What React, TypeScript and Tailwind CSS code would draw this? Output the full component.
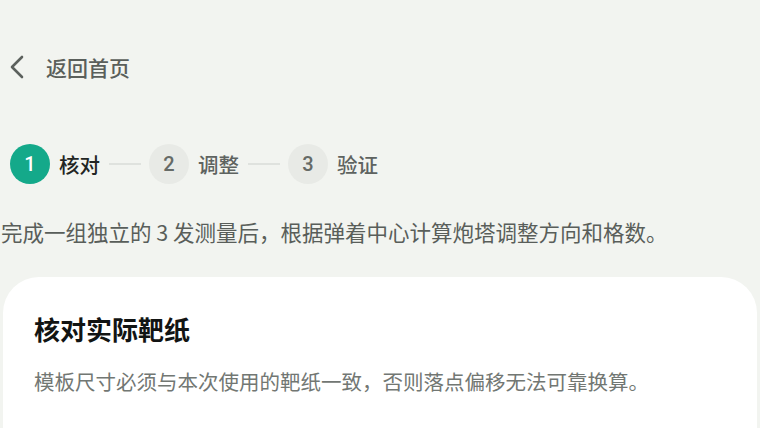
import React from "react";

const FONT = '"Noto Sans CJK SC", "Noto Sans", Roboto, sans-serif';

function Step({ n, label, active }: { n: number; label: string; active?: boolean }) {
  return (
    <div className="flex items-center">
      <div
        className={
          active
            ? "w-10 h-10 rounded-full bg-[#14a98a] text-white flex items-center justify-center text-[20px] font-medium"
            : "w-10 h-10 rounded-full bg-[#e8eae6] text-[#666b67] flex items-center justify-center text-[20px] font-medium"
        }
        style={{ fontFamily: 'Roboto, "Noto Sans", sans-serif' }}
      >
        {n}
      </div>
      <span
        className={
          active
            ? "ml-[9px] w-[42px] text-[20.5px] leading-[30px] font-medium text-[#222523]"
            : "ml-[9px] w-[42px] text-[20.5px] leading-[30px] font-medium text-[#5e6360]"
        }
      >
        {label}
      </span>
    </div>
  );
}

function Line() {
  return <div className="mx-2 w-8 h-[2px] bg-[#dfe2de]" />;
}

export default function App() {
  return (
    <div
      className="w-full h-[428px] overflow-hidden bg-[#f2f4f0] flex flex-col"
      style={{ fontFamily: FONT }}
    >
      <div className="mt-[44px] h-[46px] flex items-center pl-[9px]">
        <svg width="16" height="24" viewBox="0 0 16 24" fill="none">
          <path d="M13 2 L3 12 L13 22" stroke="#5c615d" strokeWidth="2.6" strokeLinecap="round" strokeLinejoin="round" />
        </svg>
        <span className="ml-[21px] text-[21px] leading-[30px] font-medium text-[#5a5f5b]">返回首页</span>
      </div>

      <div className="mt-[54px] h-10 flex items-center pl-[10px]">
        <Step n={1} label="核对" active />
        <Line />
        <Step n={2} label="调整" />
        <Line />
        <Step n={3} label="验证" />
      </div>

      <p className="mt-[33px] pl-[1px] text-[21.5px] leading-[30px] text-[#595e5a] whitespace-nowrap">
        完成一组独立的 3 发测量后，根据弹着中心计算炮塔调整方向和格数。
      </p>

      <div className="mt-[30px] mx-[3px] flex-1 bg-white rounded-t-[36px] pl-[31px] pt-[35px]">
        <h2 className="text-[26px] leading-[34px] font-bold text-[#121413]">核对实际靶纸</h2>
        <p className="mt-5 text-[20.5px] leading-[30px] text-[#727773] whitespace-nowrap">
          模板尺寸必须与本次使用的靶纸一致，否则落点偏移无法可靠换算。
        </p>
      </div>
    </div>
  );
}
